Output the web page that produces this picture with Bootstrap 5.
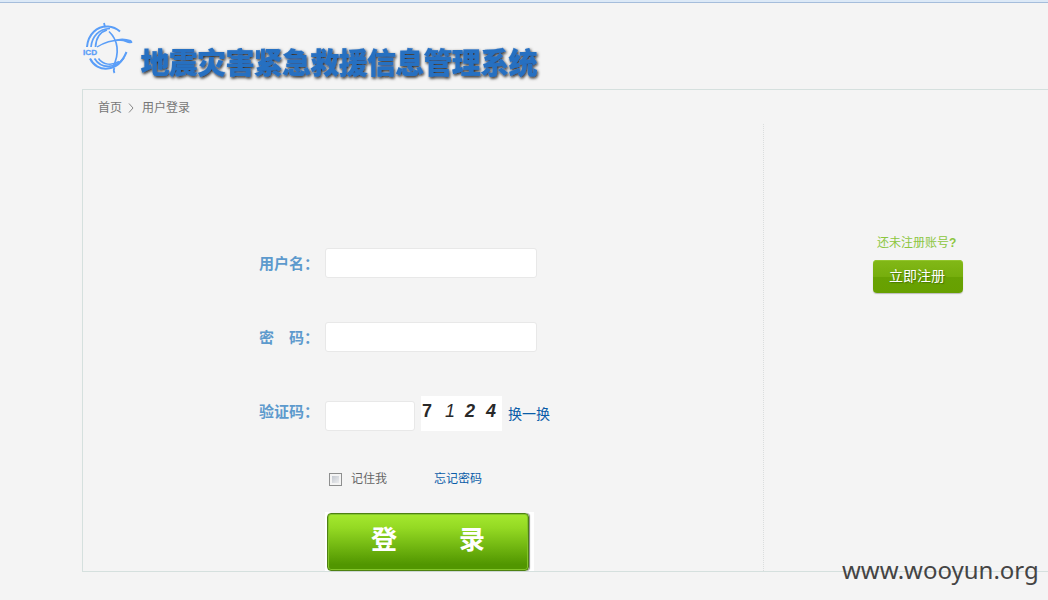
<!DOCTYPE html>
<html lang="zh-CN">
<head>
  <meta charset="UTF-8" />
  <title>用户登录</title>
  <link href="https://cdn.jsdelivr.net/npm/bootstrap@5.3.0/dist/css/bootstrap.min.css" rel="stylesheet" />
  <style>
    body {
      height: 600px;
      background: #f4f4f4;
      font: 12px/18px "Liberation Sans", "Noto Sans CJK SC", sans-serif;
      color: #666;
    }
    a { color: #0a5ca8; text-decoration: none; }
    .top-strip { height: 3px; background: #dce9f7; border-bottom: 1px solid #a5bddb; }
    .site-head { height: 86px; padding: 19px 0 0 82px; }
    .login-panel { height: 483px; margin-left: 82px; border: 1px solid #d5e0de; border-right: 0; }
    .crumbs { height: 34px; padding: 9px 0 0 15px; color: #777; }
    .panel-body { height: 447px; }
    .login-side { width: 681px; padding: 124px 0 0 176px; border-right: 1px dotted #dadddd; }
    .join-side { padding: 110px 0 0 109px; }
    .form-line { height: 30px; margin-bottom: 44px; }
    .field-label { width: 66px; font-size: 15px; font-weight: 700; line-height: 32px; color: #5d9acd; white-space: pre; }
    .field-box { width: 212px; height: 30px; padding: 2px 6px; border: 1px solid #e8e8e8; border-radius: 3px; background: #fff; }
    .field-code { width: 90px; margin-top: 5px; }
    .captcha { width: 81px; height: 35px; margin-left: 6px; background: #fff; }
    .swap-link { margin: 9px 0 0 6px; font-size: 14px; }
    .options-line { height: 18px; padding-left: 70px; }
    .remember-box { appearance: none; width: 13px; height: 13px; margin: 3px 9px 0 0; border: 1px solid #8e8f8f; background: linear-gradient(135deg, #b9bfc8, #f6f6f6); box-shadow: inset 0 0 0 2px #f4f4f4; }
    .forgot-link { margin-left: 47px; }
    .login-wrap { width: 209px; height: 59px; margin: 24px 0 0 66px; padding: 1px 0 0 2px; background: #fff; }
    .login-btn { width: 202px; height: 58px; padding: 0 43px; border: 1px solid #4e8112; border-radius: 4px; background: linear-gradient(#a5e92f, #94d923 25%, #519600 90%); box-shadow: inset 0 0 0 1px #83c52a, 1px 0 1px #888; color: #fff; font-size: 26px; font-weight: 700; line-height: 53px; }
    .join-tip { padding-left: 4px; color: #8cc63f; }
    .join-btn { width: 90px; height: 33px; margin-top: 8px; padding: 0 2px 0 0; border: 0; border-radius: 4px; background: linear-gradient(#82b817, #76ae0d 50%, #68a203 52%, #67a000); box-shadow: inset 0 1px #92c52d, 0 1px 1px #bbb; color: #fff; font-size: 14px; line-height: 31px; text-shadow: 1px 1px 1px #477800; }
    .site-mark { position: absolute; left: 842px; top: 553px; font: 24px/34px "Noto Sans", sans-serif; color: #444; }
  </style>
</head>
<body class="overflow-hidden position-relative">
  <div class="top-strip"></div>
  <header class="site-head">
    <svg class="d-block" width="470" height="66" viewBox="0 0 470 66" role="img" aria-label="地震灾害紧急救援信息管理系统">
      <defs>
        <filter id="titleShadow" x="-5%" y="-20%" width="110%" height="150%">
          <feDropShadow dx="1" dy="1.5" stdDeviation="1.6" flood-color="#111" flood-opacity=".95" />
        </filter>
      </defs>
      <g fill="none" stroke="#5a9ef8">
        <path d="M5 25C6 12 15 4 26 4.500Q33 5 38 9.500" stroke-width="2" />
        <path d="M9 25C10 14 17 7 28 6.500" stroke-width="1.7" />
        <path d="M13.500 25C14 16 18 10 25 8" stroke-width="1.7" />
        <path d="M8 36.500C15 51 36 51 44.500 30" stroke-width="2" />
        <path d="M12.500 36.500C19 47 33 47 42 36" stroke-width="1.7" />
        <path d="M16.500 36.500C21 43 30 44 37 39.500" stroke-width="1.5" />
        <path d="M27 9.500C36 18 38 31 31 45" stroke-width="1.7" />
        <path d="M23 5L22 1M32.500 46Q31 48 32.500 51" stroke-width="1.8" />
        <path d="M15 25Q27 17 43 18" stroke-width="1.5" />
      </g>
      <path d="M32 18Q40 15 49 18Q53 22 46 21Q40 18 32 19Z" fill="#5a9ef8" />
      <text x="1" y="33" textLength="14" lengthAdjust="spacingAndGlyphs" font-family="Liberation Sans, sans-serif" font-size="8" font-weight="700" fill="#5a9ef8" stroke="#5a9ef8" stroke-width=".3">ICD</text>
      <text x="58.500" y="52" textLength="397" font-family="Noto Sans CJK SC, sans-serif" font-size="29" font-weight="900" fill="#286fc1" stroke="#286fc1" stroke-width=".2" filter="url(#titleShadow)">地震灾害紧急救援信息管理系统</text>
    </svg>
  </header>

  <main class="login-panel">
    <div class="crumbs d-flex">
      <span>首页</span>
      <svg width="8" height="10" viewBox="0 0 8 10" class="ms-1 mt-1"><path d="M3 .5L7 5L3 9.500" fill="none" stroke="#888" /></svg>
      <span class="ps-2">用户登录</span>
    </div>
    <div class="panel-body d-flex">
      <form class="login-side flex-shrink-0">
        <div class="form-line d-flex">
          <label class="field-label" for="username">用户名：</label>
          <input class="field-box" id="username" type="text">
        </div>
        <div class="form-line d-flex">
          <label class="field-label" for="password">密　码：</label>
          <input class="field-box" id="password" type="password">
        </div>
        <div class="form-line d-flex align-items-start">
          <label class="field-label" for="code">验证码：</label>
          <input class="field-box field-code" id="code" type="text">
          <svg class="captcha" viewBox="0 0 81 35">
            <g font-family="Liberation Sans, sans-serif" font-size="18" font-weight="700" font-style="italic" fill="#292929">
              <text x="1" y="21" font-style="normal">7</text>
              <text x="24" y="21" font-weight="400">1</text>
              <text x="44" y="21">2</text>
              <text x="65" y="21">4</text>
            </g>
          </svg>
          <a class="swap-link" href="#">换一换</a>
        </div>
        <div class="options-line d-flex">
          <input class="remember-box" id="remember" type="checkbox">
          <label for="remember">记住我</label>
          <a class="forgot-link" href="#">忘记密码</a>
        </div>
        <div class="login-wrap">
          <button class="login-btn d-flex justify-content-between" type="button"><span>登</span><span>录</span></button>
        </div>
      </form>
      <aside class="join-side">
        <div class="join-tip">还未注册账号<b>?</b></div>
        <button class="join-btn d-block" type="button">立即注册</button>
      </aside>
    </div>
  </main>
  <div class="site-mark">www.wooyun.org</div>
  <script src="https://cdn.jsdelivr.net/npm/bootstrap@5.3.0/dist/js/bootstrap.bundle.min.js"></script>
</body>
</html>
